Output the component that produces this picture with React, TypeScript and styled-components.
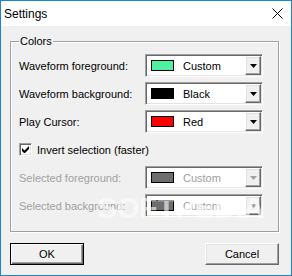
import React from "react";
import styled, { createGlobalStyle } from "styled-components";

const GlobalStyle = createGlobalStyle`
  html, body {
    margin: 0;
    padding: 0;
  }
  body {
    font-family: "Liberation Sans", Arial, sans-serif;
    font-size: 11px;
    color: #000;
  }
`;

const Window = styled.div`
  position: relative;
  width: 292px;
  height: 276px;
  box-sizing: border-box;
  border: 1px solid #1883d7;
  background: #f0f0f0;
  display: flex;
  flex-direction: column;
  overflow: hidden;
`;

const TitleBar = styled.div`
  height: 25px;
  flex: none;
  background: #fff;
  display: flex;
  align-items: center;
  justify-content: space-between;
  padding: 0 8px 0 3px;
  font-size: 12px;
`;

const Client = styled.div`
  flex: 1;
  display: flex;
  flex-direction: column;
  padding: 9px 12px 0 9px;
`;

const Group = styled.fieldset`
  margin: 0;
  padding: 6px 8px 14px 8px;
  border: 1px solid #a0a0a0;
  box-shadow: 1px 1px 0 #fff, inset 1px 1px 0 #fff;
`;

const Legend = styled.legend`
  padding: 0 1px;
  line-height: 13px;
  background: #f0f0f0;
  position: relative;
`;

const Grid = styled.div`
  display: grid;
  grid-template-columns: 126px 118px;
  grid-auto-rows: 23px;
  row-gap: 5px;
  align-items: center;
`;

const Label = styled.span<{ $disabled?: boolean }>`
  color: ${(p) => (p.$disabled ? "#a0a0a0" : "#000")};
  white-space: nowrap;
`;

const Combo = styled.div`
  height: 23px;
  box-sizing: border-box;
  border: 1px solid;
  border-color: #a0a0a0 #fff #fff #a0a0a0;
  box-shadow: inset 1px 1px 0 #696969, inset -1px -1px 0 #e3e3e3;
  background: #fff;
  display: flex;
  align-items: center;
  padding: 1px;
`;

const Swatch = styled.span<{ $color: string }>`
  width: 23px;
  height: 11px;
  box-sizing: border-box;
  margin-left: 4px;
  border: 1px solid #000;
  background: ${(p) => p.$color};
`;

const ComboText = styled.span<{ $disabled?: boolean }>`
  flex: 1;
  margin-left: 9px;
  color: ${(p) => (p.$disabled ? "#a0a0a0" : "#000")};
`;

const DropButton = styled.span`
  width: 16px;
  height: 19px;
  box-sizing: border-box;
  border: 1px solid;
  border-color: #fff #696969 #696969 #fff;
  box-shadow: inset -1px -1px 0 #a0a0a0, inset 1px 1px 0 #e3e3e3;
  background: #f0f0f0;
  display: flex;
  align-items: center;
  justify-content: center;
`;

const CheckRow = styled.label`
  grid-column: 1 / span 2;
  height: 21px;
  display: flex;
  align-items: center;
  gap: 5px;
`;

const CheckBox = styled.span`
  width: 13px;
  height: 13px;
  box-sizing: border-box;
  border: 1px solid;
  border-color: #a0a0a0 #fff #fff #a0a0a0;
  box-shadow: inset 1px 1px 0 #696969, inset -1px -1px 0 #e3e3e3;
  background: #fff;
  display: flex;
  align-items: center;
  justify-content: center;
`;

const Footer = styled.div`
  display: flex;
  justify-content: space-between;
  margin-top: 11px;
`;

const Button = styled.button<{ $default?: boolean }>`
  width: 74px;
  height: 22px;
  box-sizing: border-box;
  padding: 0;
  font-family: "Liberation Sans", Arial, sans-serif;
  font-size: 11px;
  color: #000;
  background: #f0f0f0;
  border: 1px solid;
  border-color: ${(p) =>
    p.$default ? "#000" : "#fff #696969 #696969 #fff"};
  box-shadow: ${(p) =>
    p.$default
      ? "inset 1px 1px 0 #fff, inset -1px -1px 0 #696969, inset -2px -2px 0 #a0a0a0"
      : "inset -1px -1px 0 #a0a0a0, inset 1px 1px 0 #e3e3e3"};
`;

const Watermark = styled.div`
  position: absolute;
  left: 96px;
  top: 190px;
  font-size: 30px;
  font-weight: bold;
  letter-spacing: -0.5px;
  color: rgba(255, 255, 255, 0.6);
  -webkit-text-stroke: 0.5px rgba(0, 0, 0, 0.03);
  pointer-events: none;
  white-space: nowrap;
`;

const Arrow = ({ color }: { color: string }) => (
  <svg width="7" height="4" viewBox="0 0 7 4">
    <polygon points="0,0 7,0 3.5,4" fill={color} />
  </svg>
);

const ColorCombo = ({
  color,
  text,
  disabled,
}: {
  color: string;
  text: string;
  disabled?: boolean;
}) => (
  <Combo>
    <Swatch $color={color} />
    <ComboText $disabled={disabled}>{text}</ComboText>
    <DropButton>
      <Arrow color={disabled ? "#a0a0a0" : "#000"} />
    </DropButton>
  </Combo>
);

const rows = [
  { label: "Waveform foreground:", color: "#50f0a0", text: "Custom" },
  { label: "Waveform background:", color: "#000000", text: "Black" },
  { label: "Play Cursor:", color: "#ff0000", text: "Red" },
];

const disabledRows = [
  { label: "Selected foreground:", color: "#6d6d6d", text: "Custom" },
  { label: "Selected background:", color: "#6d6d6d", text: "Custom" },
];

export default function App() {
  return (
    <>
      <GlobalStyle />
      <Window>
        <TitleBar>
          <span>Settings</span>
          <svg width="11" height="11" viewBox="0 0 11 11">
            <path d="M0.5 0.5 L10.5 10.5 M10.5 0.5 L0.5 10.5" stroke="#000" strokeWidth="1" />
          </svg>
        </TitleBar>
        <Client>
          <Group>
            <Legend>Colors</Legend>
            <Grid>
              {rows.map((r) => (
                <React.Fragment key={r.label}>
                  <Label>{r.label}</Label>
                  <ColorCombo color={r.color} text={r.text} />
                </React.Fragment>
              ))}
              <CheckRow>
                <CheckBox>
                  <svg width="7" height="7" viewBox="0 0 7 7">
                    <path d="M0 2 L2.5 4.5 L7 0 V3 L2.5 7.5 L0 5 Z" fill="#000" />
                  </svg>
                </CheckBox>
                <span>Invert selection (faster)</span>
              </CheckRow>
              {disabledRows.map((r) => (
                <React.Fragment key={r.label}>
                  <Label $disabled>{r.label}</Label>
                  <ColorCombo color={r.color} text={r.text} disabled />
                </React.Fragment>
              ))}
            </Grid>
          </Group>
          <Footer>
            <Button $default>OK</Button>
            <Button>Cancel</Button>
          </Footer>
        </Client>
        <Watermark>SOFTPEDIA</Watermark>
      </Window>
    </>
  );
}
